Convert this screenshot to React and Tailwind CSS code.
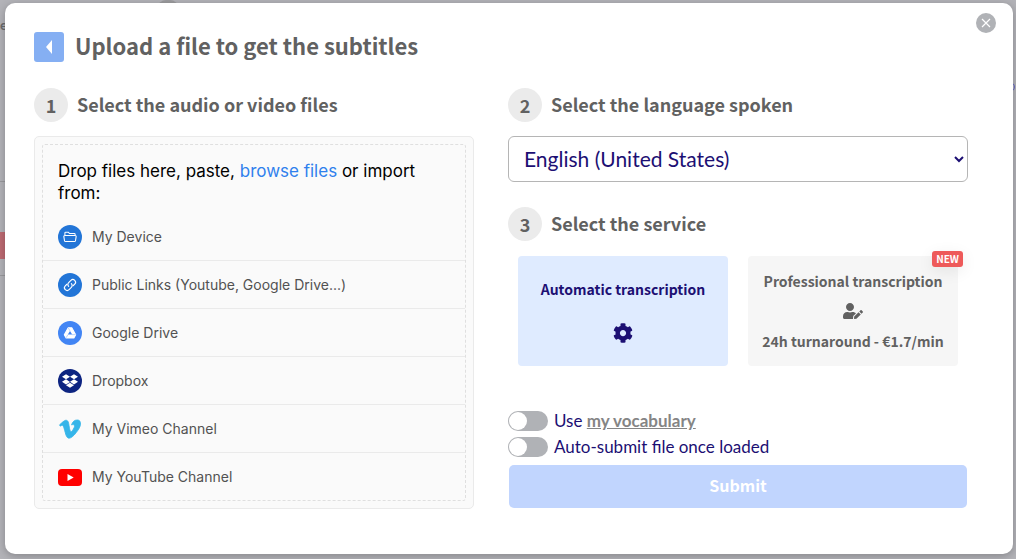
import React, { useState } from 'react';
import { FaCog, FaDropbox, FaUserEdit, FaVimeoV } from 'react-icons/fa';

function DeviceIcon() {
  return (
    <svg className="size-6" viewBox="0 0 32 32">
      <circle cx="16" cy="16" r="16" fill="#2275d7" />
      <path
        d="M9.2 14v-3.4c0-.6.4-1 1-1h3.4l1.6 1.6h6.6c.6 0 1 .4 1 1V14M9.2 14h13.6c1 0 1.5.6 1.4 1.4l-.8 5.2c-.1.9-.7 1.4-1.6 1.4H10.2c-.9 0-1.5-.5-1.6-1.4l-.8-5.2c-.1-.8.4-1.4 1.4-1.4z"
        fill="none"
        stroke="#fff"
        strokeWidth="1.4"
        strokeLinejoin="round"
      />
    </svg>
  );
}

function LinkIcon() {
  return (
    <svg className="size-6" viewBox="0 0 32 32">
      <circle cx="16" cy="16" r="16" fill="#2275d7" />
      <g fill="none" stroke="#fff" strokeWidth="1.5" strokeLinecap="round">
        <path d="M14.2 17.8a3.6 3.6 0 0 1 0-5.1l3-3a3.6 3.6 0 0 1 5.1 5.1l-2.2 2.2" />
        <path d="M17.8 14.2a3.6 3.6 0 0 1 0 5.1l-3 3a3.6 3.6 0 0 1-5.1-5.1l2.2-2.2" />
      </g>
    </svg>
  );
}

function GoogleDriveIcon() {
  return (
    <svg className="size-6" viewBox="0 0 32 32">
      <circle cx="16" cy="16" r="16" fill="#4285f4" />
      <path
        d="M13.6 9h4.8l5.2 9.2-2.4 4.3H10.8l-2.4-4.3z"
        fill="#fff"
        stroke="#fff"
        strokeWidth="1.4"
        strokeLinejoin="round"
      />
      <path d="M16 13.2l2.9 4.9h-5.8z" fill="#4285f4" />
      <path d="M13.2 18.2l-2.4 4.2M18.7 18.2h4.9M16 13.2L13.7 9.2" stroke="#4285f4" strokeWidth=".5" />
    </svg>
  );
}

function DropboxIcon() {
  return (
    <span className="flex size-6 items-center justify-center rounded-full bg-[#0d2481]">
      <FaDropbox className="size-4 text-white" />
    </span>
  );
}

function YouTubeIcon() {
  return (
    <svg className="size-6" viewBox="0 0 24 24">
      <rect x="0" y="4" width="24" height="17" rx="4" fill="#f00" />
      <path d="M9.5 9v7l6.2-3.5z" fill="#fff" />
    </svg>
  );
}

// Heavier and slightly wider than the stock Vimeo mark
function VimeoIcon() {
  return <FaVimeoV className="size-6 stroke-[#35b5e9] stroke-[18] text-[#35b5e9]" />;
}

const sources = [
  { name: 'My Device', icon: <DeviceIcon /> },
  { name: 'Public Links (Youtube, Google Drive...)', icon: <LinkIcon /> },
  { name: 'Google Drive', icon: <GoogleDriveIcon /> },
  { name: 'Dropbox', icon: <DropboxIcon /> },
  { name: 'My Vimeo Channel', icon: <VimeoIcon /> },
  { name: 'My YouTube Channel', icon: <YouTubeIcon /> },
];

function StepTitle({ number, children }) {
  return (
    <h2 className="flex items-center gap-[9px] font-['Noto_Sans_CJK_SC',sans-serif] text-lg leading-6 font-bold text-[#616161]">
      <span className="flex size-[34px] shrink-0 items-center justify-center rounded-full bg-[#ebebeb] pb-px">{number}</span>
      <span className="pb-[2px]">{children}</span>
    </h2>
  );
}

function Toggle({ id, checked, onChange, children }) {
  return (
    <div className="flex h-[26px] items-center gap-[6px]">
      <input
        type="checkbox"
        role="switch"
        id={id}
        checked={checked}
        onChange={(e) => onChange(e.target.checked)}
        className="flex h-5 w-10 shrink-0 appearance-none items-center rounded-full bg-[#b0b2b6] px-px before:size-[18px] before:rounded-full before:bg-white checked:justify-end checked:bg-[#4285f4]"
      />
      <label htmlFor={id} className="text-[17px] leading-6">{children}</label>
    </div>
  );
}

// Slivers of the dimmed page that stay visible around the dialog
function Backdrop() {
  return (
    <div aria-hidden="true" className="absolute inset-0 overflow-hidden">
      <span className="absolute top-[13px] left-0 text-sm leading-6 font-bold text-[#6b6b6e]">e</span>
      <span className="absolute top-0 left-[158px] h-4 w-5 rounded-full bg-[#9c9c9f]" />
      <span className="absolute top-[181px] left-0 h-px w-3 bg-[#99999d]" />
      <span className="absolute top-[232px] left-0 h-[27px] w-3 bg-[#bd6a72]" />
      <span className="absolute top-[275px] left-0 h-px w-3 bg-[#99999d]" />
      <span className="absolute top-[82px] right-px size-[10px] rounded-full border border-[#6668c8]" />
    </div>
  );
}

export default function App() {
  const [language, setLanguage] = useState('en-US');
  const [service, setService] = useState('automatic');
  const [vocabulary, setVocabulary] = useState(false);
  const [autoSubmit, setAutoSubmit] = useState(false);

  return (
    <div className="relative flex min-h-screen bg-[#b3b3b8] pt-[3px] pr-[3px] pb-[5px] pl-[5px] font-['Lato',sans-serif]">
      <Backdrop />
      <main className="relative flex-1 rounded-[10px] bg-white pt-[29px] pr-[45px] pb-11 pl-[29px] shadow-[0_2px_8px_rgba(0,0,0,0.25)]">
        <button
          type="button"
          aria-label="Close"
          className="absolute top-[10px] right-[17px] flex size-5 items-center justify-center rounded-full bg-[#b0b2b6]"
        >
          <svg className="size-[10px]" viewBox="0 0 10 10">
            <path d="M1 1l8 8M9 1L1 9" stroke="#fff" strokeWidth="1.2" />
          </svg>
        </button>

        <header className="flex items-center gap-[11px]">
          <button
            type="button"
            aria-label="Back"
            className="flex size-[30px] items-center justify-center rounded-[3px] bg-[#85aff3]"
          >
            <svg className="size-4" viewBox="0 0 16 16">
              <path d="M11 1v14L5 8z" fill="#fff" />
            </svg>
          </button>
          <h1 className="pb-1 font-['Noto_Sans_CJK_SC',sans-serif] text-[22px] leading-[26px] font-bold text-[#616161]">
            Upload a file to get the subtitles
          </h1>
        </header>

        <div className="mt-[26px] grid grid-cols-[22fr_23fr] gap-[34px]">
          <section>
            <StepTitle number={1}>Select the audio or video files</StepTitle>
            <div className="mt-[14px] rounded-[5px] border border-[#eaeaea] bg-[#fafafa] p-[7px] font-['Inter',sans-serif]">
              <div className="rounded-[3px] border border-dashed border-[#dfdfdf]">
                <p className="px-[15px] pt-[15px] pb-[9px] text-[17px] leading-[22px] text-black">
                  Drop files here, paste,{' '}
                  <a href="#browse" className="text-[#2f80ed]">browse files</a> or import from:
                </p>
                <ul className="divide-y divide-[#eaeaea]">
                  {sources.map((source) => (
                    <li key={source.name}>
                      <button
                        type="button"
                        className="flex h-[47px] w-full items-center gap-[10px] px-[15px] text-left text-sm text-[#525252]"
                      >
                        {source.icon}
                        {source.name}
                      </button>
                    </li>
                  ))}
                </ul>
              </div>
            </div>
          </section>

          <section className="flex flex-col">
            <StepTitle number={2}>
              <label htmlFor="language">Select the language spoken</label>
            </StepTitle>
            <select
              id="language"
              value={language}
              onChange={(e) => setLanguage(e.target.value)}
              className="mt-[14px] h-[46px] w-full shrink-0 rounded-md border border-[#b5b5b5] bg-white pb-[2px] pl-[11px] text-[21px] text-[#1c0f73]"
            >
              <option value="en-US">English (United States)</option>
              <option value="en-GB">English (United Kingdom)</option>
            </select>

            <div className="mt-[25px]">
              <StepTitle number={3}>Select the service</StepTitle>
            </div>
            <div className="mt-[15px] grid grid-cols-2 gap-5 px-[10px] font-['Noto_Sans_CJK_SC',sans-serif] text-sm leading-5 font-bold">
              <button
                type="button"
                aria-pressed={service === 'automatic'}
                onClick={() => setService('automatic')}
                className="flex h-[110px] flex-col items-center justify-center gap-6 rounded bg-[#dfebff] text-[#1c0f73]"
              >
                Automatic transcription
                <FaCog className="size-5" />
              </button>
              <button
                type="button"
                aria-pressed={service === 'professional'}
                onClick={() => setService('professional')}
                className="relative flex h-[110px] flex-col items-center justify-center gap-[10px] rounded bg-[#f6f6f6] text-[#616161]"
              >
                Professional transcription
                <FaUserEdit className="size-5" />
                <span>24h turnaround - €1.7/min</span>
                <span className="absolute -top-[5px] -right-[5px] rounded-[3px] bg-[#ee5a5a] px-1 text-[10px] leading-4 text-white shadow-[0_4px_16px_rgba(0,0,0,0.08)]">
                  NEW
                </span>
              </button>
            </div>

            <div className="mt-[42px] text-[#1c0f73]">
              <Toggle id="vocabulary" checked={vocabulary} onChange={setVocabulary}>
                Use{' '}
                <a href="#vocabulary" className="font-bold text-[#858585] underline">my vocabulary</a>
              </Toggle>
              <Toggle id="auto-submit" checked={autoSubmit} onChange={setAutoSubmit}>
                Auto-submit file once loaded
              </Toggle>
            </div>
            <button
              type="submit"
              className="mx-px mt-[5px] h-[43px] rounded-[5px] bg-[#c1d5fe] pb-1 font-['Noto_Sans_CJK_SC',sans-serif] text-base font-bold text-white"
            >
              Submit
            </button>
          </section>
        </div>
      </main>
    </div>
  );
}
